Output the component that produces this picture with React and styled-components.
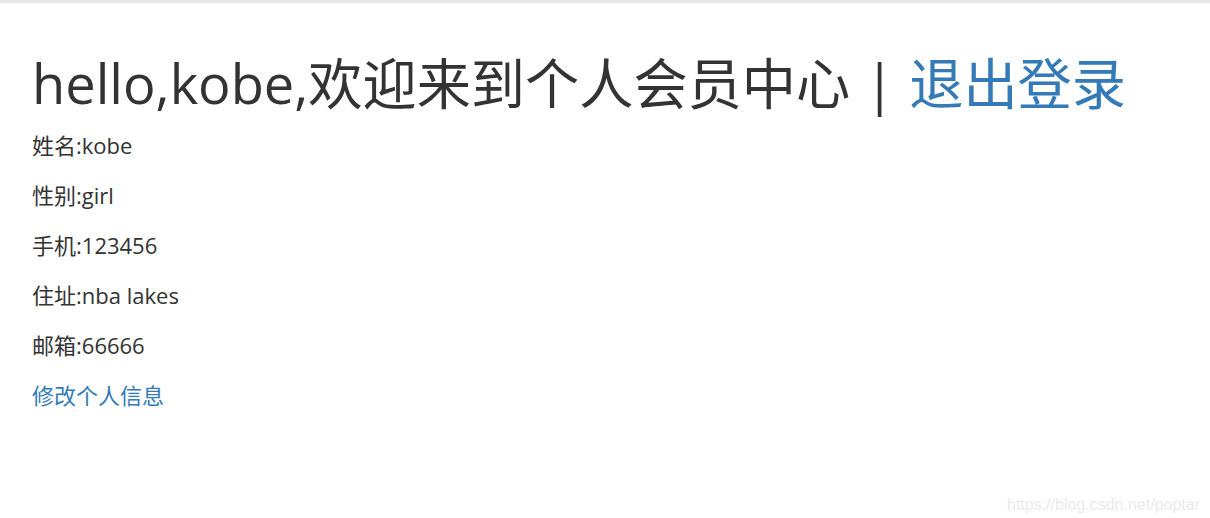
import styled, { createGlobalStyle } from 'styled-components';

const GlobalStyle = createGlobalStyle`
  html, body {
    margin: 0;
    padding: 0;
    background: #fff;
  }
  body {
    font-family: 'Open Sans', 'Noto Sans CJK SC', sans-serif;
    color: #333;
  }
`;

const Page = styled.div`
  position: relative;
  height: 518px;
  border-top: 3px solid #e6e6e6;
  box-sizing: border-box;
  padding: 40px 32px 0;
`;

const Title = styled.h1`
  margin: 0 0 -3px;
  font-size: 54.2px;
  font-weight: 400;
  line-height: 80px;
  white-space: nowrap;
`;

const Divider = styled.span`
  margin: 0 0.27em;
`;

const Link = styled.a`
  color: #337ab7;
  text-decoration: none;
  cursor: pointer;
`;

const Row = styled.p`
  margin: 0;
  font-size: 22px;
  line-height: 50px;
  height: 50px;
`;

const Watermark = styled.span`
  position: absolute;
  right: 10px;
  bottom: 4px;
  font-family: 'Liberation Sans', Arial, sans-serif;
  font-size: 16px;
  color: #ebebeb;
`;

const info = [
  ['姓名', 'kobe'],
  ['性别', 'girl'],
  ['手机', '123456'],
  ['住址', 'nba lakes'],
  ['邮箱', '66666'],
];

const App = () => (
  <>
    <GlobalStyle />
    <Page>
      <Title>
        hello,kobe,欢迎来到个人会员中心<Divider>|</Divider>
        <Link>退出登录</Link>
      </Title>
      {info.map(([label, value]) => (
        <Row key={label}>
          {label}:{value}
        </Row>
      ))}
      <Row>
        <Link>修改个人信息</Link>
      </Row>
      <Watermark>https://blog.csdn.net/poptar</Watermark>
    </Page>
  </>
);

export default App;
